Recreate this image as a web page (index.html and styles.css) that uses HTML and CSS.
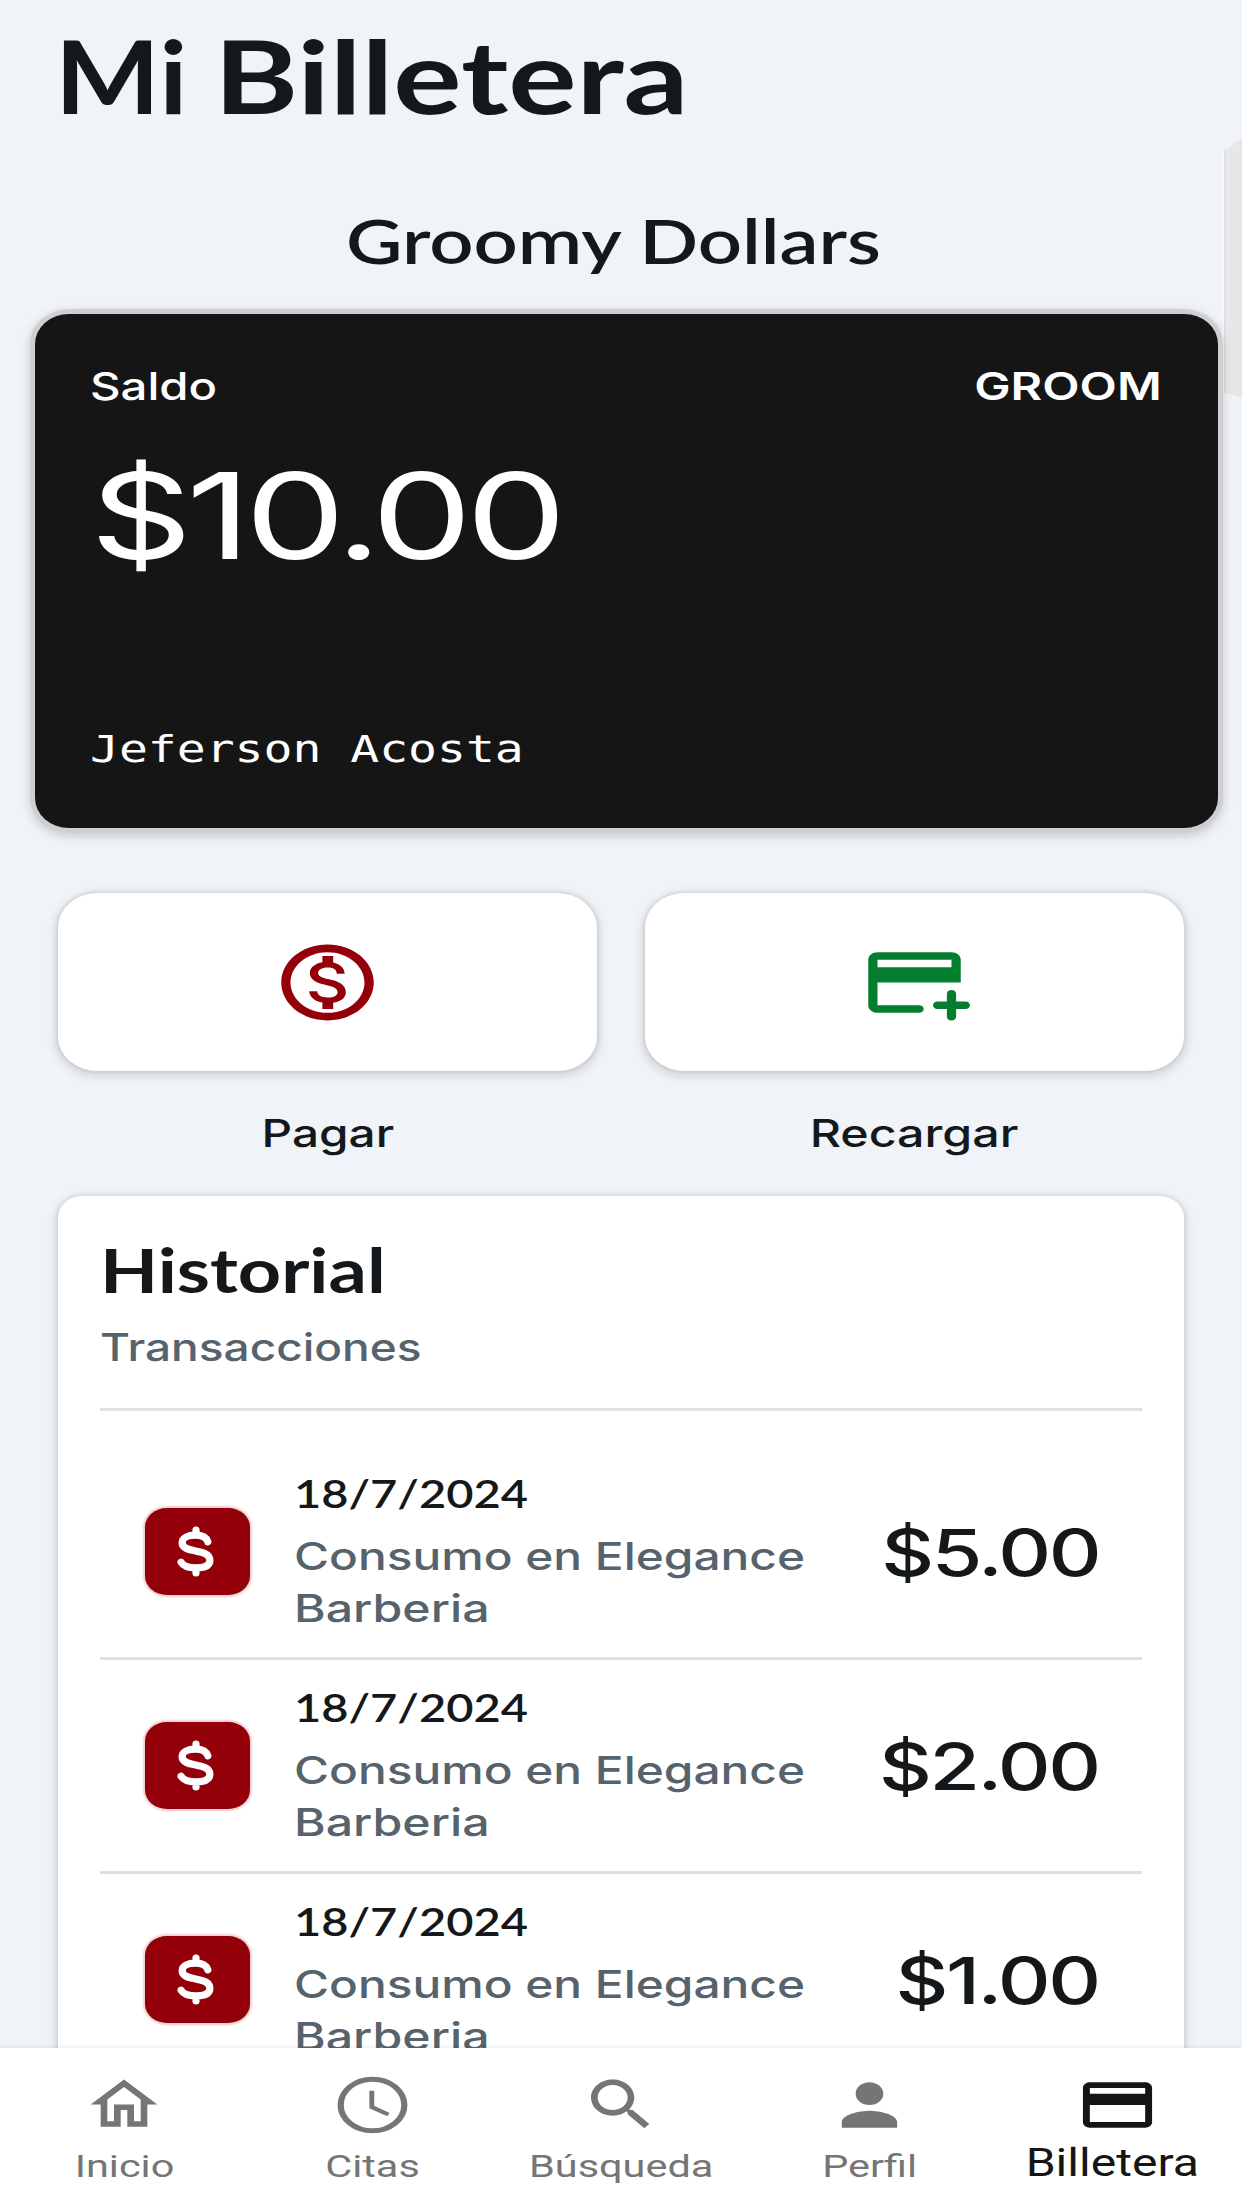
FILE: index.html
```html
<!DOCTYPE html>
<html lang="es">
<head>
<meta charset="utf-8">
<title>Mi Billetera</title>
<link rel="stylesheet" href="styles.css">
</head>
<body>
<svg class="defs" aria-hidden="true">
  <symbol id="dollar" viewBox="0 0 36 50" preserveAspectRatio="none">
    <path d="M30 15.500C28.500 11 24 9 18 9C10.500 9 5 11.500 5 16.500C5 27.500 32 21.500 32 33.500C32 39 26 41 18.500 41C11 41 6 39 4 35.500M18.500 4V8M18.500 42V46" fill="none" stroke="#fff" stroke-width="7" stroke-linecap="round" stroke-linejoin="round"/>
  </symbol>
</svg>
<div class="app">
  <div class="edge-handle"></div>
  <main class="page">
    <h1 class="title"><span class="wide w-title-a">Mi</span> <span class="wide w-title-b">Billetera</span></h1>
    <h2 class="subtitle"><span class="wide w-subtitle">Groomy Dollars</span></h2>

    <section class="balance">
      <div class="balance-top">
        <span class="wide w-saldo">Saldo</span>
        <span class="wide w-brand">GROOM</span>
      </div>
      <div class="balance-amount"><span class="wide w-balance">$10.00</span></div>
      <div class="balance-owner"><span class="wide w-owner">Jeferson Acosta</span></div>
    </section>

    <section class="actions">
      <div class="action">
        <button class="action-button">
          <svg class="action-icon" viewBox="0 0 24 24" preserveAspectRatio="none" fill="#93000a"><path d="M12 2C6.480 2 2 6.480 2 12s4.480 10 10 10 10-4.480 10-10S17.520 2 12 2zm0 18c-4.410 0-8-3.590-8-8s3.590-8 8-8 8 3.590 8 8-3.590 8-8 8zm.31-8.860c-1.770-.45-2.340-.94-2.340-1.670 0-.84.79-1.430 2.100-1.430 1.380 0 1.900.66 1.940 1.640h1.710c-.05-1.340-.87-2.570-2.490-2.970V5H10.900v1.690c-1.510.32-2.720 1.300-2.720 2.810 0 1.790 1.490 2.690 3.660 3.210 1.950.46 2.340 1.150 2.340 1.870 0 .53-.39 1.390-2.100 1.390-1.600 0-2.230-.72-2.320-1.640H8.040c.1 1.700 1.360 2.660 2.860 2.970V19h2.340v-1.670c1.520-.29 2.720-1.160 2.730-2.770-.01-2.200-1.900-2.960-3.660-3.420z"/></svg>
        </button>
        <span class="action-label"><span class="wide w-pay">Pagar</span></span>
      </div>
      <div class="action">
        <button class="action-button">
          <svg class="action-icon" viewBox="0 0 24 24" preserveAspectRatio="none" fill="#037d2e"><path fill-rule="evenodd" d="M4 4H20C21.110 4 22 4.890 22 6V12H4V18H13C13.550 18 14 18.450 14 19S13.550 20 13 20H4C2.890 20 2 19.110 2 18V6C2 4.890 2.890 4 4 4ZM4 6V8H20V6Z"/><path d="M20 14c.55 0 1 .45 1 1v2h2c.55 0 1 .45 1 1s-.45 1-1 1h-2v2c0 .55-.45 1-1 1s-1-.45-1-1v-2h-2c-.55 0-1-.45-1-1s.45-1 1-1h2v-2c0-.55.45-1 1-1z"/></svg>
        </button>
        <span class="action-label"><span class="wide w-recharge">Recargar</span></span>
      </div>
    </section>

    <section class="history">
      <h2 class="history-title"><span class="wide w-history">Historial</span></h2>
      <p class="history-sub"><span class="wide w-sub">Transacciones</span></p>
      <ul class="rows">
        <li class="row">
          <span class="badge"><svg class="badge-icon"><use href="#dollar"/></svg></span>
          <div class="detail">
            <span class="date"><span class="wide w-date">18/7/2024</span></span>
            <span class="desc"><span class="wide w-desc">Consumo en Elegance</span><br><span class="wide w-desc2">Barberia</span></span>
          </div>
          <span class="amount"><span class="wide w-amount">$5.00</span></span>
        </li>
        <li class="row">
          <span class="badge"><svg class="badge-icon"><use href="#dollar"/></svg></span>
          <div class="detail">
            <span class="date"><span class="wide w-date">18/7/2024</span></span>
            <span class="desc"><span class="wide w-desc">Consumo en Elegance</span><br><span class="wide w-desc2">Barberia</span></span>
          </div>
          <span class="amount"><span class="wide w-amount">$2.00</span></span>
        </li>
        <li class="row">
          <span class="badge"><svg class="badge-icon"><use href="#dollar"/></svg></span>
          <div class="detail">
            <span class="date"><span class="wide w-date">18/7/2024</span></span>
            <span class="desc"><span class="wide w-desc">Consumo en Elegance</span><br><span class="wide w-desc2">Barberia</span></span>
          </div>
          <span class="amount"><span class="wide w-amount">$1.00</span></span>
        </li>
      </ul>
    </section>
  </main>

  <nav class="tabs">
    <a class="tab">
      <svg class="tab-icon home" viewBox="0 0 24 24" preserveAspectRatio="none"><path d="M12 5.690l5 4.500V18h-2v-6H9v6H7v-7.810l5-4.500M12 3L2 12h3v8h6v-6h2v6h6v-8h3L12 3z"/></svg>
      <span class="tab-label"><span class="wide w-tab">Inicio</span></span>
    </a>
    <a class="tab">
      <svg class="tab-icon" viewBox="0 0 24 24" preserveAspectRatio="none" fill="none" stroke="currentColor"><ellipse cx="12" cy="12" rx="9.200" ry="9.100" stroke-width="1.800"/><path d="M11.800 7V12.700L16.600 15.400" stroke-width="1.400"/></svg>
      <span class="tab-label"><span class="wide w-tab">Citas</span></span>
    </a>
    <a class="tab">
      <svg class="tab-icon home" viewBox="0 0 24 24" preserveAspectRatio="none"><path d="M15.500 14h-.79l-.28-.27C15.410 12.590 16 11.110 16 9.500 16 5.910 13.090 3 9.500 3S3 5.910 3 9.500 5.910 16 9.500 16c1.610 0 3.090-.59 4.230-1.570l.27.28v.79l5 4.990L20.490 19l-4.990-5zm-6 0C7.010 14 5 11.990 5 9.500S7.010 5 9.500 5 14 7.010 14 9.500 11.990 14 9.500 14z"/></svg>
      <span class="tab-label"><span class="wide w-tab">Búsqueda</span></span>
    </a>
    <a class="tab">
      <svg class="tab-icon" viewBox="0 0 24 24" preserveAspectRatio="none"><path d="M12 12c2.210 0 4-1.790 4-4s-1.790-4-4-4-4 1.790-4 4 1.790 4 4 4zm0 2c-2.670 0-8 1.340-8 4v2h16v-2c0-2.660-5.330-4-8-4z"/></svg>
      <span class="tab-label"><span class="wide w-tab">Perfil</span></span>
    </a>
    <a class="tab active">
      <svg class="tab-icon" viewBox="0 0 24 24" preserveAspectRatio="none"><path d="M20 4H4c-1.110 0-1.990.89-1.990 2L2 18c0 1.110.89 2 2 2h16c1.110 0 2-.89 2-2V6c0-1.110-.89-2-2-2zm0 14H4v-6h16v6zm0-10H4V6h16v2z"/></svg>
      <span class="tab-label"><span class="wide w-tab-active">Billetera</span></span>
    </a>
  </nav>
</div>
</body>
</html>
```

FILE: styles.css
```css
* { box-sizing: border-box; }

body {
  margin: 0;
  background: #f0f4f8;
  color: #14181b;
  font-family: Inter, "Liberation Sans", sans-serif;
  font-size: 38px;
}

h1, h2, p, ul { margin: 0; padding: 0; font-weight: inherit; }

.defs { position: absolute; width: 0; height: 0; }

.app {
  position: relative;
  width: 1242px;
  height: 2208px;
  display: flex;
  flex-direction: column;
  overflow: hidden;
}

.page { flex: 1; min-height: 0; overflow: hidden; position: relative; }

/* Extended letterforms */
.wide {
  display: inline-block;
  white-space: nowrap;
  transform: scaleX(var(--sx, 1.26));
  transform-origin: 0 50%;
}
.w-title-a { --sx: 1.1; }
.w-title-b { --sx: 1.268; }
.w-subtitle { --sx: 1.272; }
.w-saldo { --sx: 1.245; }
.w-brand { --sx: 1.278; transform-origin: 100% 50%; }
.w-balance { --sx: 1.34; letter-spacing: -4.500px; }
.w-owner { --sx: 1.264; }
.w-pay { --sx: 1.255; transform-origin: 50% 50%; }
.w-recharge { --sx: 1.272; transform-origin: 50% 50%; }
.w-history { --sx: 1.238; }
.w-sub { --sx: 1.21; }
.w-date { --sx: 1.205; }
.w-desc { --sx: 1.258; }
.w-desc2 { --sx: 1.27; }
.w-amount { --sx: 1.28; letter-spacing: -1.900px; transform-origin: 100% 50%; }
.w-tab { --sx: 1.295; transform-origin: 50% 50%; }
.w-tab-active { --sx: 1.233; transform-origin: 50% 50%; }

.title {
  display: flex;
  gap: 39px;
  padding: 0 0 0 55px;
  font: 700 101px/150px Lato, sans-serif;
}

.subtitle {
  margin-top: 54px;
  padding-left: 346px;
  font: 600 61px/74px Lato, sans-serif;
}

/* System edge panel handle peeking in from the right */
.edge-handle {
  position: absolute;
  top: 138px;
  right: 0;
  width: 20px;
  height: 260px;
  background: linear-gradient(90deg, #f6f7fa 0 2px, #dfe0e3 2px 4px, #e9e9eb 4px 7px, #e7e7e8 7px);
  clip-path: polygon(0 14px, 100% 0, 100% 100%, 0 254px);
}

.balance {
  margin: 36px 24px 0 35px;
  height: 514px;
  padding: 48px 56px 0 55px;
  border-radius: 34px / 30px;
  background: #151515;
  color: #fff;
  box-shadow: 0 0 1px 5px #cfcfd2, 0 3px 12px 4px rgba(0, 0, 0, .2);
}
.balance-top { display: flex; justify-content: space-between; line-height: 48px; font-weight: 500; }
.w-brand { font-weight: 600; }
.balance-amount { margin-top: 34px; font-size: 119px; font-weight: 440; line-height: 144px; }
.balance-owner { margin: 137px 0 0 0; font-family: "DejaVu Sans Mono", monospace; line-height: 48px; }

.actions {
  display: grid;
  grid-template-columns: 1fr 1fr;
  gap: 48px;
  margin: 65px 58px 0 58px;
}
.action { display: flex; flex-direction: column; align-items: center; }
.action-button {
  width: 100%;
  height: 178px;
  padding: 0;
  border: 0;
  border-radius: 40px / 34px;
  background: #fff;
  display: flex;
  align-items: center;
  justify-content: center;
  box-shadow: 0 3px 10px 3px rgba(0, 0, 0, .12), 0 0 3px 2px rgba(0, 0, 0, .06);
}
.action-icon { width: 111px; height: 91px; }
.action-label { margin-top: 38px; line-height: 48px; font-weight: 450; }

.history {
  margin: 39px 58px 0 58px;
  height: 1100px;
  padding: 37px 42px 0 42px;
  border-radius: 24px 24px 0 0 / 22px 22px 0 0;
  background: #fff;
  box-shadow: 0 3px 10px 3px rgba(0, 0, 0, .11), 0 0 3px 2px rgba(0, 0, 0, .05);
}
.history-title { font: 700 61px/74px Lato, sans-serif; }
.history-sub { margin-top: 16px; color: #57636c; font-weight: 450; line-height: 48px; padding-bottom: 37px; border-bottom: 3px solid #e0e0e0; }
.rows { list-style: none; padding-top: 35px; }
.row {
  display: flex;
  align-items: center;
  height: 214px;
  padding: 0 43px 0 45px;
  border-bottom: 3px solid #e0e0e0;
}
.badge {
  flex: none;
  width: 105px;
  height: 87px;
  border-radius: 22px / 19px;
  background: #93000a;
  box-shadow: 0 0 2px 2px #f0cfd1;
  display: flex;
  align-items: center;
  justify-content: center;
}
.badge-icon { width: 37px; height: 51px; margin-right: 4px; }
.detail { flex: 1; margin-left: 44px; }
.date, .desc { display: block; }
.date { font: 600 39px/48px Lato, sans-serif; margin-bottom: 14px; }
.desc { color: #57636c; font-weight: 450; line-height: 51.400px; }
.amount { font-weight: 500; font-size: 64px; line-height: 76px; padding-top: 3px; }

.tabs {
  position: relative;
  flex: none;
  height: 160px;
  display: grid;
  grid-template-columns: repeat(5, 1fr);
  background: #fff;
  box-shadow: 0 0 4px rgba(0, 0, 0, .12);
}
.tab {
  display: flex;
  flex-direction: column;
  align-items: center;
  padding-top: 23px;
  color: #757575;
  font-family: Roboto, sans-serif;
  font-size: 32px;
  fill: currentColor;
}
.tab-icon { width: 83px; height: 68px; }
.tab-icon.home { width: 80px; height: 67px; margin-bottom: 1px; }
.tab-label { margin-top: 7px; line-height: 40px; }
.active { color: #151515; }
.active .tab-label { font-size: 39px; margin: 4px 12px 0 0; }
```
